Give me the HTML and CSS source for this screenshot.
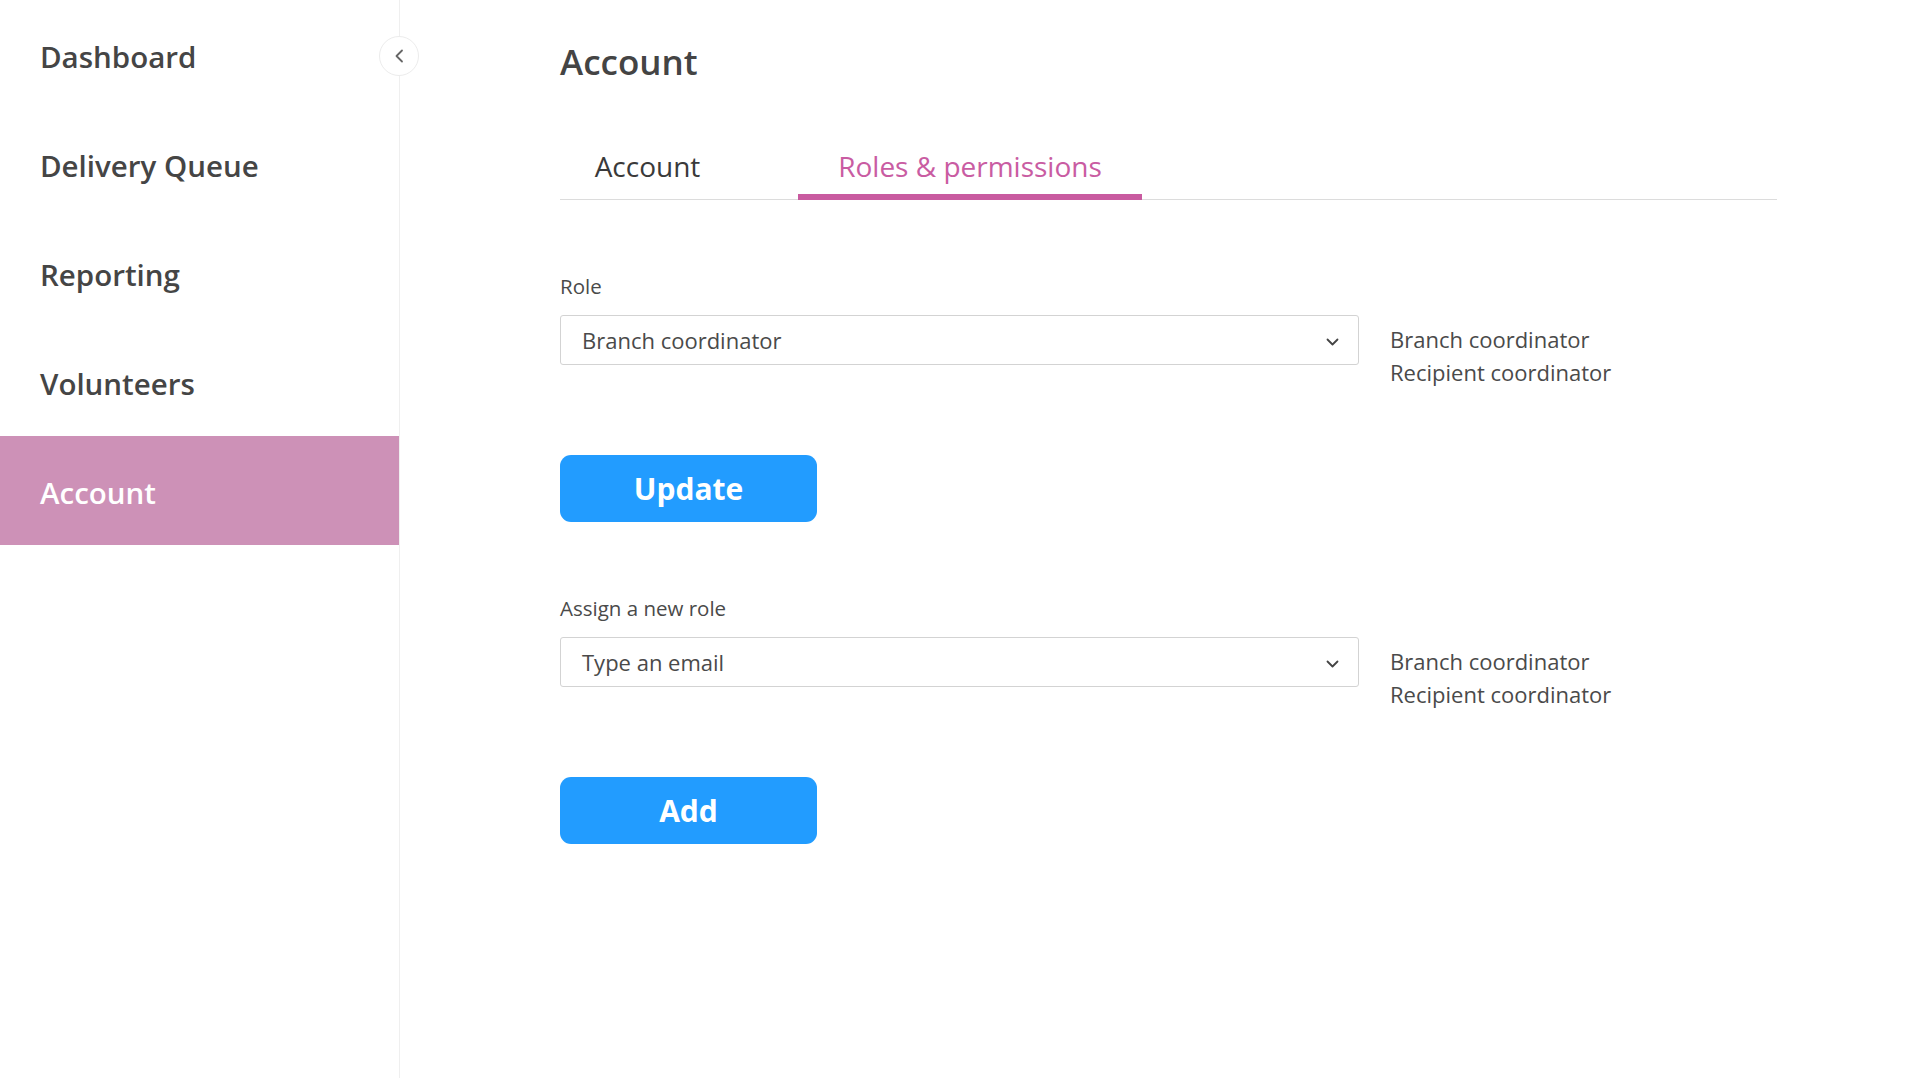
FILE: index.html
```html
<!DOCTYPE html>
<html lang="en">
<head>
<meta charset="utf-8">
<title>Account</title>
<link rel="stylesheet" href="styles.css">
</head>
<body>
<div class="app">
  <aside class="sidebar">
    <nav class="nav">
      <a class="nav-item">Dashboard</a>
      <a class="nav-item">Delivery Queue</a>
      <a class="nav-item">Reporting</a>
      <a class="nav-item">Volunteers</a>
      <a class="nav-item active">Account</a>
    </nav>
    <button class="collapse" aria-label="Collapse">
      <svg width="10" height="14" viewBox="0 0 10 14"><path d="M8 1.5 L2.5 7 L8 12.5" fill="none" stroke="#666" stroke-width="1.8" stroke-linecap="round" stroke-linejoin="round"/></svg>
    </button>
  </aside>
  <main class="main">
    <h1 class="title">Account</h1>
    <div class="tabs">
      <div class="tab tab-account">Account</div>
      <div class="tab tab-roles active">Roles &amp; permissions</div>
    </div>

    <section class="section">
      <div class="label">Role</div>
      <div class="row">
        <div class="select">
          <span>Branch coordinator</span>
          <svg class="chev" width="13" height="8" viewBox="0 0 13 8"><path d="M1.5 1.5 L6.5 6.5 L11.5 1.5" fill="none" stroke="#444" stroke-width="1.8" stroke-linecap="round" stroke-linejoin="round"/></svg>
        </div>
        <ul class="options">
          <li>Branch coordinator</li>
          <li>Recipient coordinator</li>
        </ul>
      </div>
      <button class="btn">Update</button>
    </section>

    <section class="section">
      <div class="label">Assign a new role</div>
      <div class="row">
        <div class="select">
          <span>Type an email</span>
          <svg class="chev" width="13" height="8" viewBox="0 0 13 8"><path d="M1.5 1.5 L6.5 6.5 L11.5 1.5" fill="none" stroke="#444" stroke-width="1.8" stroke-linecap="round" stroke-linejoin="round"/></svg>
        </div>
        <ul class="options">
          <li>Branch coordinator</li>
          <li>Recipient coordinator</li>
        </ul>
      </div>
      <button class="btn">Add</button>
    </section>
  </main>
</div>
</body>
</html>
```

FILE: styles.css
```css
* { box-sizing: border-box; }
html, body { margin: 0; padding: 0; background: #fff; }
body { font-family: "Open Sans", "Noto Sans", sans-serif; color: #4a4a4a; }

.app { display: flex; min-height: 1078px; }

.sidebar {
  width: 400px;
  flex: 0 0 400px;
  border-right: 1px solid #efefef;
  position: relative;
}
.nav { display: flex; flex-direction: column; }
.nav-item {
  height: 109px;
  display: flex;
  align-items: center;
  padding: 4px 0 0 40px;
  font-size: 29.5px;
  font-weight: 600;
  color: #454545;
}
.nav-item.active { background: #cd91b7; color: #fff; }

.collapse {
  position: absolute;
  top: 36px;
  right: -20px;
  width: 40px;
  height: 40px;
  border-radius: 50%;
  border: 1px solid #ececec;
  background: #fff;
  padding: 0;
  display: flex;
  align-items: center;
  justify-content: center;
}

.main { flex: 1; padding: 40px 0 0 160px; }
.title {
  margin: 0;
  font-size: 35px;
  line-height: 43px;
  font-weight: 600;
  color: #444;
}

.tabs {
  margin-top: 63px;
  width: 1217px;
  display: flex;
  gap: 63px;
  border-bottom: 1px solid #dcdcdc;
}
.tab {
  font-size: 28px;
  line-height: 40px;
  padding-bottom: 8px;
  border-bottom: 6px solid transparent;
  margin-bottom: -1px;
  text-align: center;
  color: #3a3a3a;
}
.tab-account { width: 175px; }
.tab-roles { width: 344px; }
.tab.active { color: #c95ca2; border-bottom-color: #c95ba0; }

.section { margin-top: 72px; }
.label { font-size: 20.5px; line-height: 28px; color: #4a4a4a; }
.row { display: flex; align-items: flex-start; gap: 31px; margin-top: 15px; }
.select {
  width: 799px;
  height: 50px;
  border: 1px solid #d3d3d3;
  border-radius: 3px;
  display: flex;
  align-items: center;
  justify-content: space-between;
  padding: 0 19px 0 21px;
  font-size: 22px;
  color: #4a4a4a;
}
.chev { margin-top: 4px; }
.options {
  list-style: none;
  margin: 0;
  padding: 8px 0 0 0;
  font-size: 22px;
  line-height: 33px;
  color: #4a4a4a;
}

.btn {
  display: block;
  margin-top: 66px;
  width: 257px;
  height: 67px;
  border: 0;
  border-radius: 11px;
  background: #229cff;
  color: #fff;
  font-family: "Open Sans", "Noto Sans", sans-serif;
  font-size: 30px;
  font-weight: 700;
  padding: 0;
}
```
